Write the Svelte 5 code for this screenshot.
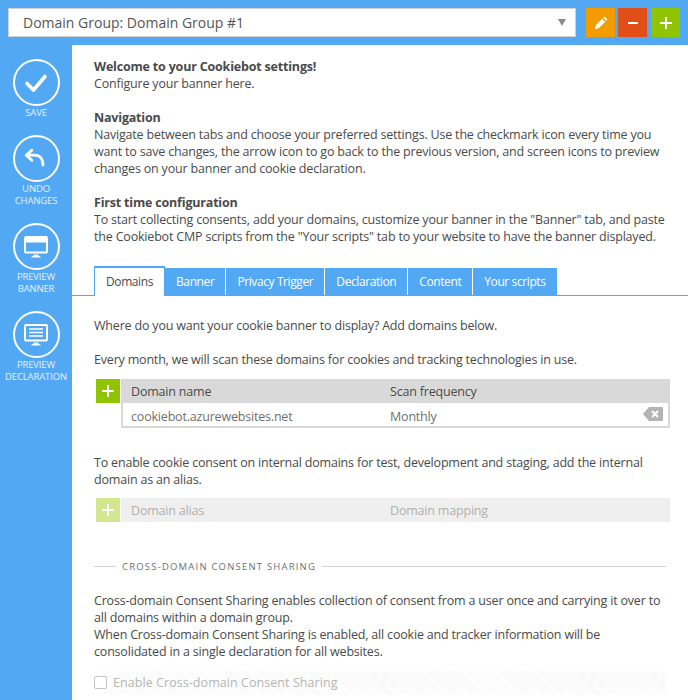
<script>
  const tabs = ["Domains", "Banner", "Privacy Trigger", "Declaration", "Content", "Your scripts"];
</script>

<div class="page">
  <header class="topbar">
    <div class="select">
      <span>Domain Group: Domain Group #1</span>
      <i class="caret"></i>
    </div>
    <button class="square orange" aria-label="Edit">
      <svg width="14" height="14" viewBox="0 0 16 16"><path d="M1 15l1-4.500 7.300-7.300 3.500 3.500L5.500 14z M10.400 2.100l.9-.9a1 1 0 0 1 1.400 0l2.100 2.100a1 1 0 0 1 0 1.400l-.9.9z" fill="#fff"/></svg>
    </button>
    <button class="square red" aria-label="Remove">
      <svg width="12" height="12" viewBox="0 0 12 12"><rect x="1" y="5" width="10" height="2" fill="#fff"/></svg>
    </button>
    <button class="square green" aria-label="Add">
      <svg width="14" height="14" viewBox="0 0 14 14"><path d="M6 1h2v5h5v2H8v5H6V8H1V6h5z" fill="#fff"/></svg>
    </button>
  </header>

  <div class="main">
    <aside class="sidebar">
      <div class="action">
        <span class="ring">
          <svg width="26" height="22" viewBox="0 0 26 22"><path d="M4 11.500l6.500 6.500L22 4.500" fill="none" stroke="#fff" stroke-width="3.600" stroke-linecap="round" stroke-linejoin="round"/></svg>
        </span>
        <span class="label">SAVE</span>
      </div>
      <div class="action">
        <span class="ring">
          <svg width="24" height="24" viewBox="0 0 24 24"><path d="M3 8.200h7.500c5 0 8.500 3.500 8.500 9.800" fill="none" stroke="#fff" stroke-width="2.800" stroke-linecap="round"/><path d="M7.800 3.200L2.200 8.200l5.600 5" fill="none" stroke="#fff" stroke-width="2.800" stroke-linecap="round" stroke-linejoin="round"/></svg>
        </span>
        <span class="label">UNDO<br />CHANGES</span>
      </div>
      <div class="action">
        <span class="ring">
          <svg width="26" height="24" viewBox="0 0 26 24"><rect x="2" y="2" width="22" height="15.500" rx="1" fill="none" stroke="#fff" stroke-width="2"/><rect x="3" y="3" width="20" height="4.500" fill="#fff"/><path d="M7.500 22.500c1.500-1 3-1.300 3.500-3h4c.5 1.700 2 2 3.500 3z" fill="#fff"/></svg>
        </span>
        <span class="label">PREVIEW<br />BANNER</span>
      </div>
      <div class="action">
        <span class="ring">
          <svg width="26" height="24" viewBox="0 0 26 24"><rect x="2" y="2" width="22" height="15.500" rx="1" fill="none" stroke="#fff" stroke-width="2"/><path d="M6 6h14M6 9.500h14M6 13h14" stroke="#fff" stroke-width="1.300"/><path d="M7.500 22.500c1.500-1 3-1.300 3.500-3h4c.5 1.700 2 2 3.500 3z" fill="#fff"/></svg>
        </span>
        <span class="label">PREVIEW<br />DECLARATION</span>
      </div>
    </aside>

    <section class="content">
      <div class="intro">
        <p><b>Welcome to your Cookiebot settings!</b><br />Configure your banner here.</p>
        <p><b>Navigation</b><br />Navigate between tabs and choose your preferred settings. Use the checkmark icon every time you<br />want to save changes, the arrow icon to go back to the previous version, and screen icons to preview<br />changes on your banner and cookie declaration.</p>
        <p><b>First time configuration</b><br />To start collecting consents, add your domains, customize your banner in the "Banner" tab, and paste<br />the Cookiebot CMP scripts from the "Your scripts" tab to your website to have the banner displayed.</p>
      </div>

      <nav class="tabs">
        {#each tabs as tab, i}
          <span class="tab" class:active={i === 0}>{tab}</span>
        {/each}
      </nav>

      <div class="panel">
        <p>Where do you want your cookie banner to display? Add domains below.</p>
        <p>Every month, we will scan these domains for cookies and tracking technologies in use.</p>

        <div class="table first">
          <button class="add" aria-label="Add domain">
            <svg width="14" height="14" viewBox="0 0 14 14"><path d="M6 1h2v5h5v2H8v5H6V8H1V6h5z" fill="#fff"/></svg>
          </button>
          <div class="grid">
            <div class="row head"><span>Domain name</span><span>Scan frequency</span></div>
            <div class="row body">
              <span>cookiebot.azurewebsites.net</span><span>Monthly</span>
              <svg class="del" width="20" height="14" viewBox="0 0 20 14"><path d="M6 0h13a1 1 0 0 1 1 1v12a1 1 0 0 1-1 1H6L0 7z" fill="#b3b3b3"/><path d="M9 4l6 6M15 4l-6 6" stroke="#fff" stroke-width="2"/></svg>
            </div>
          </div>
        </div>

        <p class="alias-text">To enable cookie consent on internal domains for test, development and staging, add the internal<br />domain as an alias.</p>

        <div class="table disabled">
          <button class="add" aria-label="Add alias">
            <svg width="14" height="14" viewBox="0 0 14 14"><path d="M6 1h2v5h5v2H8v5H6V8H1V6h5z" fill="#fff"/></svg>
          </button>
          <div class="grid">
            <div class="row head"><span>Domain alias</span><span>Domain mapping</span></div>
          </div>
        </div>

        <div class="divider"><span>CROSS-DOMAIN CONSENT SHARING</span></div>

        <p>Cross-domain Consent Sharing enables collection of consent from a user once and carrying it over to<br />all domains within a domain group.<br />When Cross-domain Consent Sharing is enabled, all cookie and tracker information will be<br />consolidated in a single declaration for all websites.</p>

        <label class="check">
          <i class="box"></i>
          <span>Enable Cross-domain Consent Sharing</span>
        </label>
      </div>
    </section>
  </div>
</div>

<style>
  :global(body) {
    margin: 0;
    background: #fff;
  }

  .page {
    width: 688px;
    height: 700px;
    overflow: hidden;
    font-family: "Open Sans", "Noto Sans", sans-serif;
    font-size: 12.5px;
    line-height: 17px;
    letter-spacing: -0.19px;
    color: #4a4a4a;
  }

  .topbar {
    display: flex;
    align-items: flex-start;
    height: 29px;
    padding: 8px;
    background: #52a8f3;
  }

  .select {
    flex: none;
    width: 568px;
    height: 29px;
    box-sizing: border-box;
    display: flex;
    align-items: center;
    justify-content: space-between;
    padding: 0 9px 0 14px;
    background: #fff;
    border: 1px solid #d0d0d0;
    font-size: 14px;
    letter-spacing: 0;
    color: #555;
  }

  .caret {
    width: 0;
    height: 0;
    border-left: 4.500px solid transparent;
    border-right: 4.500px solid transparent;
    border-top: 7px solid #8a8a8a;
  }

  .square {
    flex: none;
    width: 29px;
    height: 29px;
    padding: 0;
    border: 0;
    display: flex;
    align-items: center;
    justify-content: center;
  }

  .orange { margin-left: 10px; background: #f39c00; }
  .red { margin-left: 3px; background: #e24e17; }
  .green { margin-left: 4px; background: #8fc500; }

  .main {
    display: flex;
    height: 655px;
  }

  .sidebar {
    flex: none;
    width: 72px;
    background: #52a8f3;
    padding-top: 14px;
    box-sizing: border-box;
    display: flex;
    flex-direction: column;
    align-items: center;
  }

  .action {
    display: flex;
    flex-direction: column;
    align-items: center;
    color: #fff;
    height: 88px;
  }

  .action:first-child {
    height: 76px;
  }

  .ring {
    width: 47px;
    height: 47px;
    box-sizing: border-box;
    border: 2.500px solid #fff;
    border-radius: 50%;
    display: flex;
    align-items: center;
    justify-content: center;
  }

  .label {
    margin-top: 1px;
    font-size: 9.500px;
    line-height: 12px;
    letter-spacing: -0.15px;
    text-align: center;
    white-space: nowrap;
    color: #e3f1fd;
  }

  .content {
    flex: 1;
    min-width: 0;
    background: #fff;
  }

  p {
    margin: 0 0 17px;
    white-space: nowrap;
  }

  b {
    font-weight: 700;
  }

  .intro {
    padding: 13px 22px 0;
  }

  .tabs {
    display: flex;
    height: 29px;
    margin-top: 21px;
    padding-left: 22px;
    border-bottom: 1px solid #52a8f3;
    align-items: flex-end;
  }

  .tab {
    height: 27px;
    line-height: 27px;
    padding: 0 11px;
    margin-right: 1px;
    background: #52a8f3;
    color: #fff;
    font-size: 12px;
    letter-spacing: -0.4px;
    white-space: nowrap;
  }

  .tab.active {
    height: 30px;
    margin-bottom: -1px;
    margin-right: 0;
    background: #fff;
    color: #4a4a4a;
    border: 1px solid #52a8f3;
    border-top-width: 2px;
    border-bottom: 0;
    box-sizing: border-box;
    line-height: 27px;
  }

  .panel {
    padding: 21px 22px 0;
  }

  .table {
    display: flex;
    margin-left: 2px;
    width: 574px;
  }

  .table.first {
    margin-top: -6px;
  }

  .add {
    flex: none;
    width: 24px;
    height: 24px;
    padding: 0;
    border: 0;
    background: #8fc500;
    display: flex;
    align-items: center;
    justify-content: center;
  }

  .grid {
    flex: 1;
    margin-left: 1px;
  }

  .row {
    display: grid;
    grid-template-columns: 259px 1fr;
    align-items: center;
    padding-left: 10px;
    position: relative;
  }

  .head {
    height: 24px;
    background: #d9d9d9;
  }

  .body {
    height: 25px;
    box-sizing: border-box;
    padding-left: 8px;
    padding-top: 3px;
    border: 2px solid #d9d9d9;
    border-top: 0;
    color: #6f6f6f;
  }

  .del {
    position: absolute;
    right: 5px;
    top: 4px;
  }

  .alias-text {
    margin: 26px 0 10px;
  }

  .disabled .add {
    background: #d2e78f;
  }

  .disabled .head {
    background: #efefef;
    color: #b0b0b0;
  }

  .divider {
    display: flex;
    align-items: center;
    gap: 6px;
    margin: 36px 0 17px;
    font-size: 9.500px;
    letter-spacing: 1.200px;
    color: #6f6f6f;
    line-height: 17px;
  }

  .divider::before {
    content: "";
    width: 22px;
    height: 1px;
    background: #d4d4d4;
  }

  .divider::after {
    content: "";
    flex: 1;
    height: 1px;
    background: #d4d4d4;
  }

  .check {
    display: flex;
    align-items: center;
    gap: 6px;
    height: 23px;
    margin-top: -6px;
    color: #b5b5b5;
    letter-spacing: 0.06px;
    background: repeating-linear-gradient(45deg, #f7f7f7 0 1px, #fff 1px 3px);
  }

  .box {
    width: 11px;
    height: 11px;
    border: 1px solid #c4c4c4;
    border-radius: 2px;
    background: #fff;
  }
</style>
